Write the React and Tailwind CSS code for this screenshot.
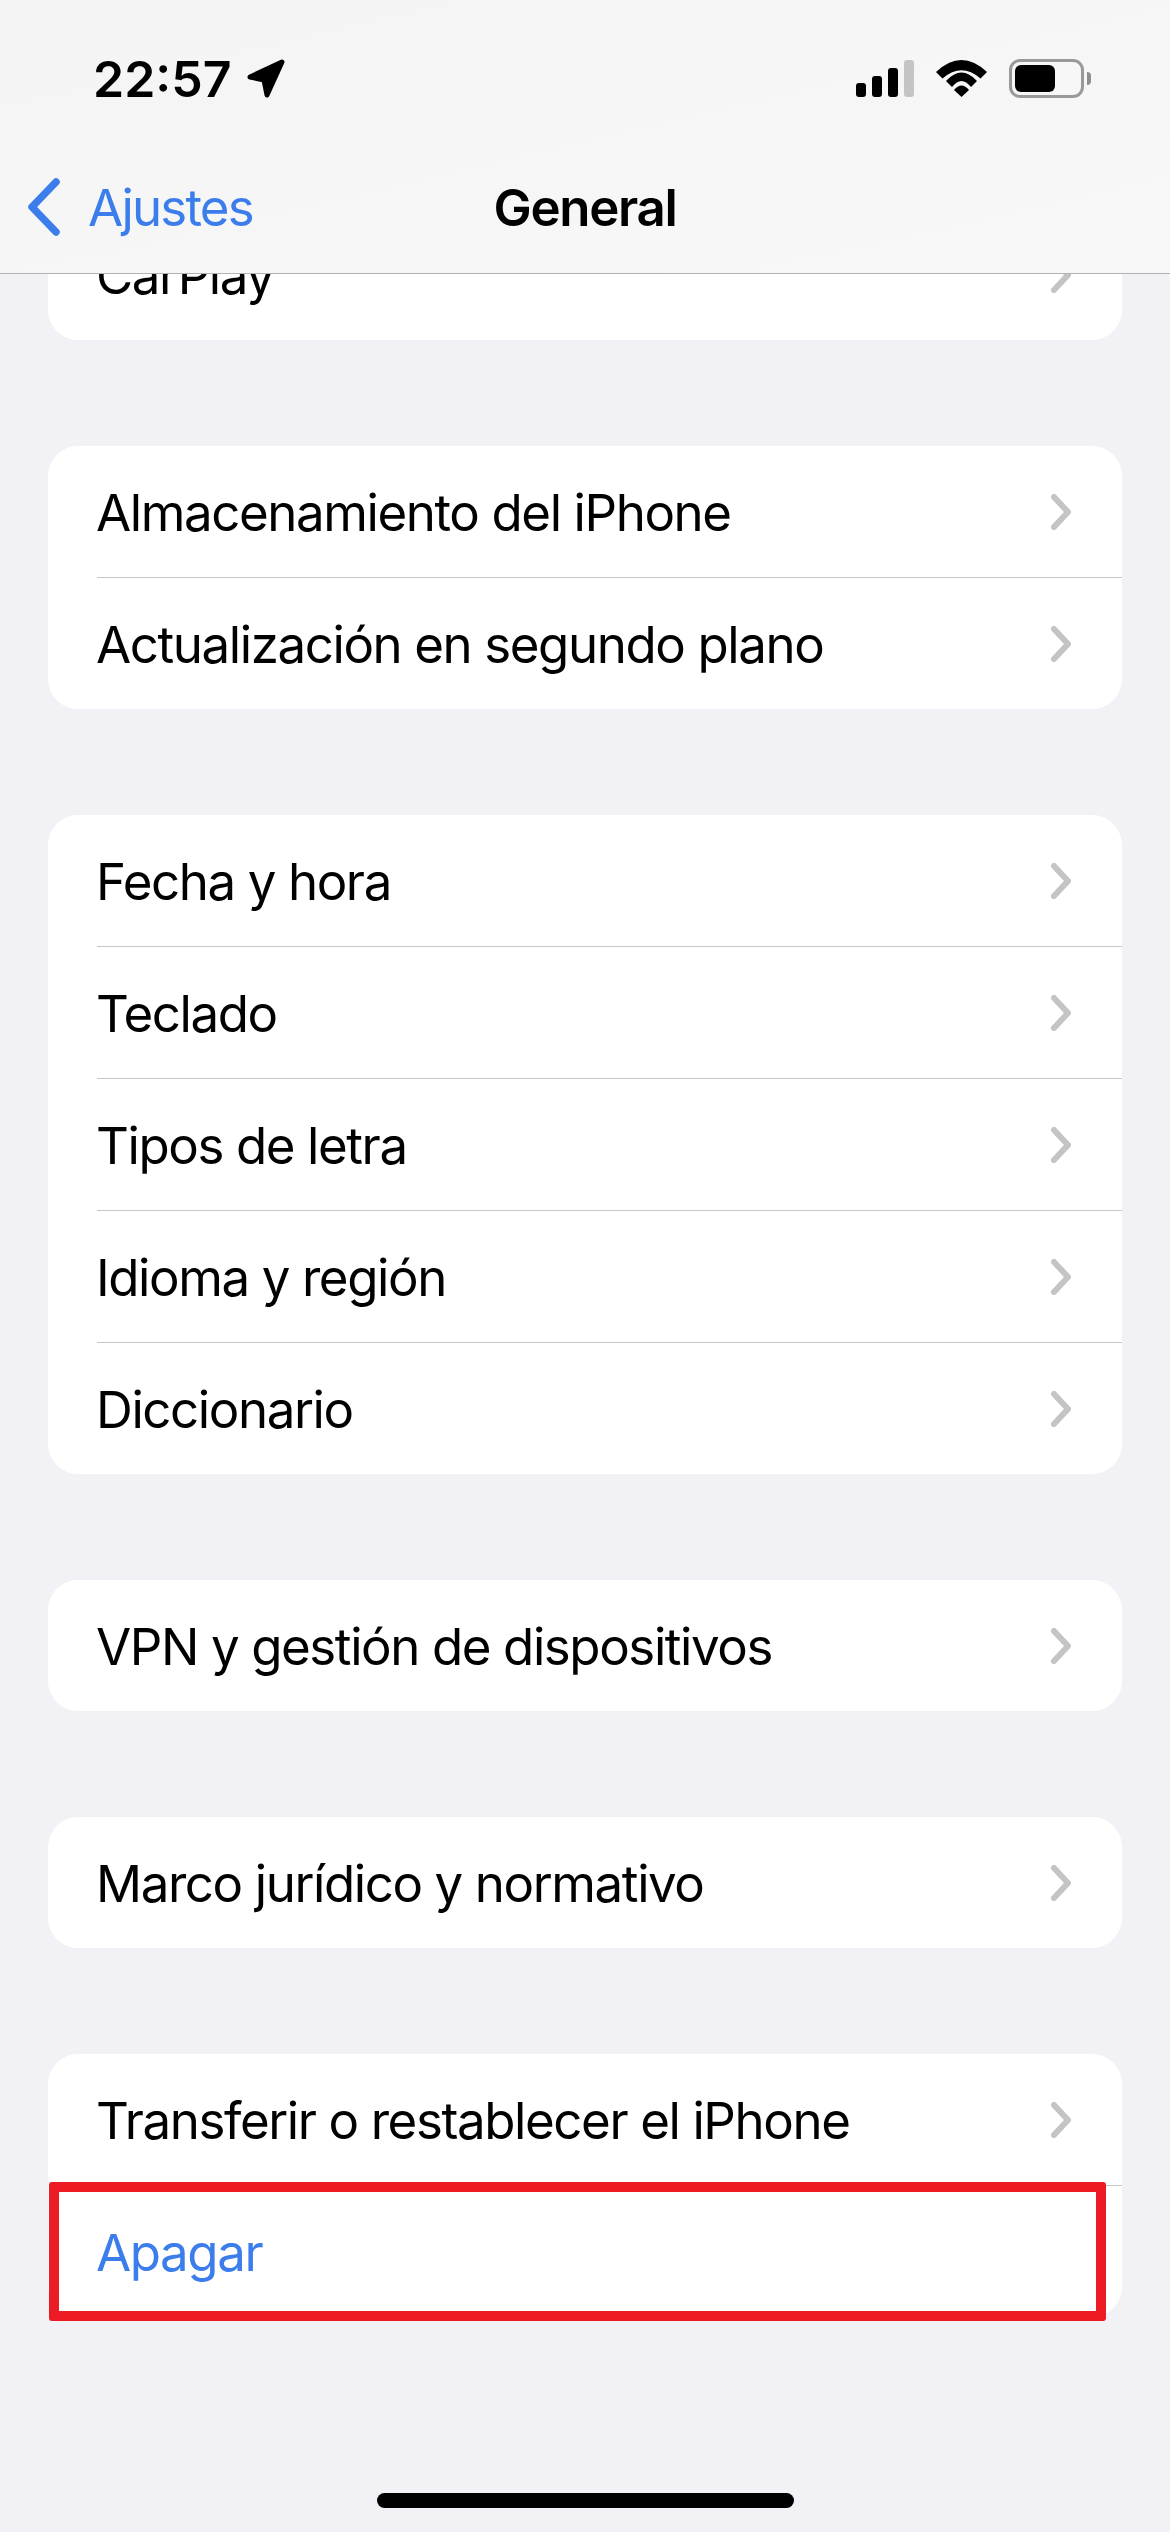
const groups = [
  ["Almacenamiento del iPhone", "Actualización en segundo plano"],
  ["Fecha y hora", "Teclado", "Tipos de letra", "Idioma y región", "Diccionario"],
  ["VPN y gestión de dispositivos"],
  ["Marco jurídico y normativo"],
];

function Chevron() {
  return (
    <svg width="20" height="36" viewBox="0 0 20 36" className="shrink-0">
      <path d="M3 3 L17 18 L3 33" fill="none" stroke="#c4c4c6" strokeWidth="6" strokeLinecap="round" strokeLinejoin="round" />
    </svg>
  );
}

function Row({ label, blue, noChevron }) {
  return (
    <div className="flex h-[131px] items-center justify-between pl-[48px] pr-[51px]">
      <span className={`pt-[2px] text-[51px] leading-none tracking-[-1.4px] ${blue ? "text-[#3c7dec]" : "text-black"}`}>
        {label}
      </span>
      {!noChevron && <Chevron />}
    </div>
  );
}

function Card({ children }) {
  return <div className="mb-[106px] rounded-[30px] bg-white">{children}</div>;
}

function Separator() {
  return <div className="ml-[49px] h-px bg-[#c6c6c8]" />;
}

function StatusIcons() {
  return (
    <div className="flex items-center">
      {/* signal */}
      <div className="flex h-[37px] items-end gap-[6px]">
        <div className="h-[14px] w-[10px] rounded-[3px] bg-black" />
        <div className="h-[21px] w-[10px] rounded-[3px] bg-black" />
        <div className="h-[29px] w-[10px] rounded-[3px] bg-black" />
        <div className="h-[37px] w-[10px] rounded-[3px] bg-[#c4c4c4]" />
      </div>
      {/* wifi */}
      <svg width="51" height="37" viewBox="0 0 51 37" className="ml-[22px]">
        <path d="M0 12 Q25.5 -12 51 12 L44.5 18.5 Q25.5 2 6.5 18.5 Z" fill="#000" />
        <path d="M10 21 Q25.5 4 41 21 L35 27 Q25.5 15 16 27 Z" fill="#000" />
        <path d="M18 30 Q25.5 21 33 30 L25.5 37 Z" fill="#000" />
      </svg>
      {/* battery */}
      <div className="ml-[22px] flex items-center">
        <div className="h-[39px] w-[75px] rounded-[11px] border-[3px] border-[#999999] p-[3px]">
          <div className="h-full w-[40px] rounded-[6px] bg-black" />
        </div>
        <div className="ml-[3px] h-[13px] w-[4px] rounded-r-[4px] bg-[#8e8e8e]" />
      </div>
    </div>
  );
}

export default function App() {
  return (
    <div className="relative h-[2532px] w-[1170px] overflow-hidden bg-[#f1f1f6] font-['Inter',sans-serif]">
      {/* scrolled list */}
      <div className="px-[48px] pt-[209px]">
        <Card>
          <Row label="CarPlay" />
        </Card>
        {groups.map((rows, i) => (
          <Card key={i}>
            {rows.map((label, j) => (
              <div key={label}>
                {j > 0 && <Separator />}
                <Row label={label} />
              </div>
            ))}
          </Card>
        ))}
        <Card>
          <Row label="Transferir o restablecer el iPhone" />
          <Separator />
          <Row label="Apagar" blue noChevron />
        </Card>
      </div>

      {/* nav bar */}
      <div className="absolute inset-x-0 top-0 h-[274px] border-b border-[#b2b2b2] bg-gradient-to-br from-[#f4f4f4] to-[#f8f8f9]">
        <div className="flex h-[157px] items-center justify-between pl-[93px] pr-[79px]">
          <div className="flex items-center gap-[15px]">
            <span className="text-[50px] font-semibold leading-none tracking-[0px] text-black">22:57</span>
            <svg width="38" height="39" viewBox="0 0 38 39">
              <path d="M3 18 L35 3 L20 36 L17 21 Z" fill="#000" stroke="#000" strokeWidth="5" strokeLinejoin="round" />
            </svg>
          </div>
          <StatusIcons />
        </div>
        <div className="relative flex h-[100px] items-center justify-center">
          <div className="absolute left-[28px] top-[21px] flex items-center gap-[28px]">
            <svg width="32" height="58" viewBox="0 0 32 58">
              <path d="M28 4 L4 29 L28 54" fill="none" stroke="#3c7dec" strokeWidth="7.5" strokeLinecap="round" strokeLinejoin="round" />
            </svg>
            <span className="text-[51px] leading-none tracking-[-1.8px] text-[#3c7dec]">Ajustes</span>
          </div>
          <span className="text-[51px] font-semibold leading-none tracking-[-1.3px] text-black">General</span>
        </div>
      </div>

      {/* red highlight over the Apagar row */}
      <div className="absolute left-[49px] top-[2182px] h-[139px] w-[1057px] rounded-[3px] border-[10px] border-[#ed1c24]" />

      {/* home indicator */}
      <div className="absolute left-[377px] top-[2493px] h-[15px] w-[417px] rounded-full bg-black" />
    </div>
  );
}
